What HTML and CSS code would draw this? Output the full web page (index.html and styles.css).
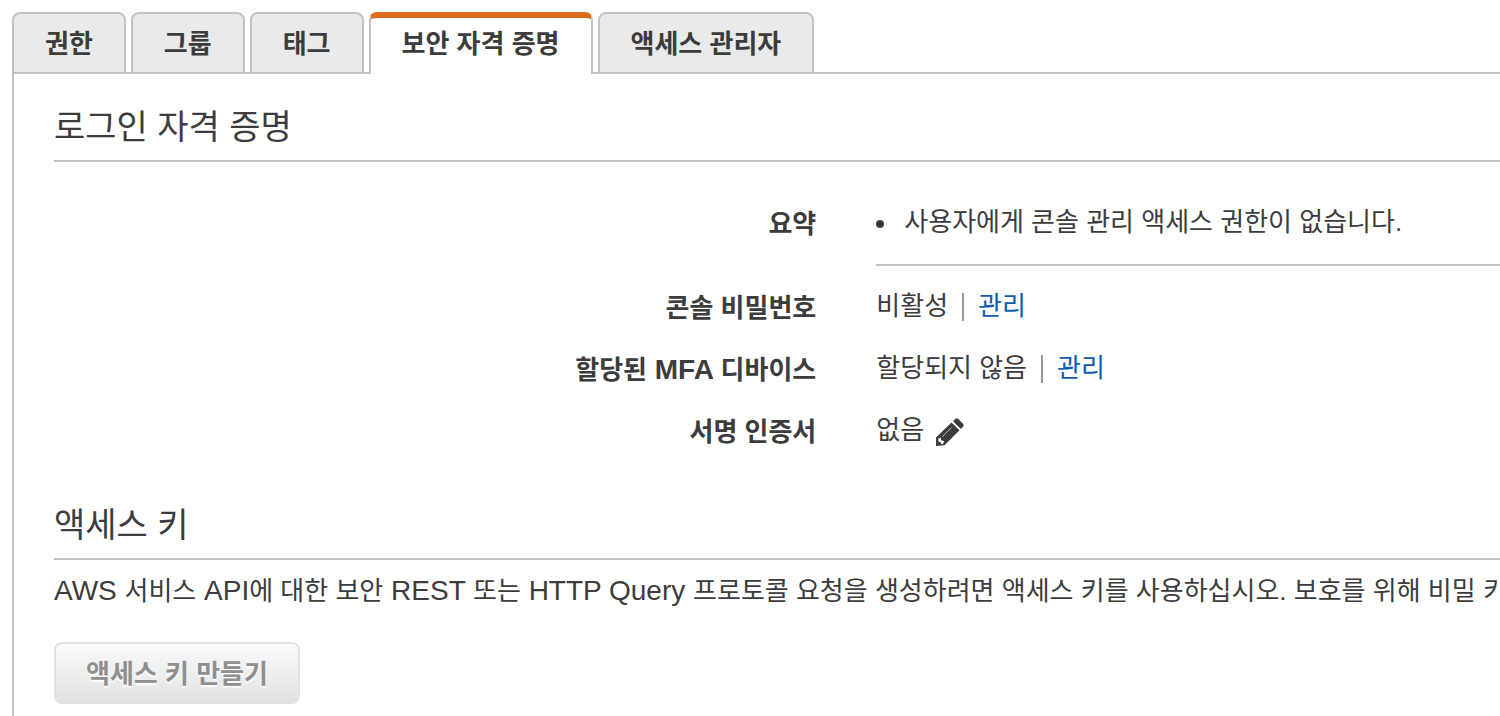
FILE: index.html
```html
<!DOCTYPE html>
<html lang="ko">
<head>
<meta charset="utf-8">
<title>보안 자격 증명</title>
<link rel="stylesheet" href="styles.css">
</head>
<body>
<main class="page">
  <div class="tabs" role="tablist">
    <button class="tab" type="button" role="tab" aria-selected="false">권한</button>
    <button class="tab" type="button" role="tab" aria-selected="false">그룹</button>
    <button class="tab" type="button" role="tab" aria-selected="false">태그</button>
    <button class="tab tab-active" type="button" role="tab" aria-selected="true">보안 자격 증명</button>
    <button class="tab" type="button" role="tab" aria-selected="false">액세스 관리자</button>
  </div>
  <div class="panel" role="tabpanel">
    <section class="section">
      <h2 class="section-title">로그인 자격 증명</h2>
      <dl class="details">
        <div class="row row-summary">
          <dt class="label">요약</dt>
          <dd class="value"><ul class="notes"><li class="note">사용자에게 콘솔 관리 액세스 권한이 없습니다.</li></ul></dd>
        </div>
        <div class="row">
          <dt class="label">콘솔 비밀번호</dt>
          <dd class="value">비활성<span class="divider"></span><a class="link" href="#">관리</a></dd>
        </div>
        <div class="row">
          <dt class="label">할당된<span class="latin"> MFA </span>디바이스</dt>
          <dd class="value">할당되지 않음<span class="divider"></span><a class="link" href="#">관리</a></dd>
        </div>
        <div class="row">
          <dt class="label">서명 인증서</dt>
          <dd class="value">없음<button class="edit" type="button" aria-label="편집">
            <svg class="edit-icon" viewBox="0 0 28 28" aria-hidden="true">
              <path class="ink" d="M0 28V19.500L15.500 4.500L23.500 12.300L8.500 27.300Z"/>
              <path class="ink" d="M17 3.200L19.500 .8Q21 -.2 22.300 1L27 5.700Q28.200 7 27.200 8.500L24.800 11Z"/>
              <path class="paper" d="M2.300 20.800L4.600 19.600L5.200 22.300L8.300 23.200L7.200 25.700L5.300 26L4.700 24.200L2.300 23.400Z"/>
              <path class="shine" d="M6.300 18.800L15.500 9.600"/>
            </svg>
          </button></dd>
        </div>
      </dl>
    </section>
    <section class="section">
      <h2 class="section-title">액세스 키</h2>
      <p class="intro"><span class="latin">AWS </span>서비스<span class="latin"> API</span>에 대한 보안<span class="latin"> REST </span>또는<span class="latin"> HTTP Query </span>프로토콜 요청을 생성하려면 액세스 키를 사용하십시오. 보호를 위해 비밀 키</p>
      <button class="create" type="button" disabled>액세스 키 만들기</button>
    </section>
  </div>
</main>
</body>
</html>
```
FILE: styles.css
```css
* {
  box-sizing: border-box;
}

body {
  margin: 0;
  background: #fff;
  color: #3c3c3c;
  font-family: "Liberation Sans", "Noto Sans CJK KR", sans-serif;
  font-size: 26px;
  line-height: 38px;
}

button {
  font: inherit;
  color: inherit;
}

.page {
  display: flex;
  flex-direction: column;
  min-height: 100vh;
  padding: 12px 0 0 12px;
  overflow: hidden;
}

.latin {
  font-size: 28px;
  line-height: 1;
}

.tabs {
  display: flex;
  gap: 5px;
  margin-bottom: -2px;
}

.tab {
  height: 62px;
  padding: 2px 31px 0;
  border: 2px solid #c3c3c3;
  border-radius: 8px 8px 0 0;
  background: #eaeaea;
  font-weight: bold;
  white-space: nowrap;
}

.tab-active {
  position: relative;
  border-top: 6px solid #dd6b1c;
  border-bottom: 0;
  padding: 0 31px 4px;
  background: #fff;
}

.panel {
  flex: 1;
  padding: 24px 0 12px 40px;
  border-top: 2px solid #c3c3c3;
  border-left: 2px solid #c3c3c3;
}

.section-title {
  margin: 0;
  padding: 8px 0 12px;
  border-bottom: 2px solid #c3c3c3;
  font-size: 34px;
  font-weight: normal;
  line-height: 42px;
}

.details {
  margin: 29px 0 35px;
}

.row {
  display: grid;
  grid-template-columns: 11fr 9fr;
  column-gap: 60px;
  align-items: start;
}

.row-summary {
  margin-bottom: 9px;
}

.label {
  padding: 14px 0 10px;
  font-weight: bold;
  text-align: right;
}

.value {
  display: flex;
  align-items: center;
  margin: 0;
  padding: 12px 0;
}

.row-summary .value {
  padding-bottom: 23px;
  border-bottom: 2px solid #c3c3c3;
}

.notes {
  margin: 0;
  padding: 0;
  list-style: none;
}

.note {
  display: flex;
  align-items: center;
  gap: 20px;
}

.note::before {
  content: "";
  width: 8px;
  height: 8px;
  margin-top: 4px;
  border-radius: 50%;
  background: #3c3c3c;
}

.divider {
  width: 2px;
  height: 28px;
  margin: 2px 14px 0;
  background: #999;
}

.link {
  color: #0f5cb3;
  text-decoration: none;
}

.edit {
  display: flex;
  margin-left: 12px;
  padding: 4px 0 0;
  border: 0;
  background: none;
}

.edit-icon {
  width: 28px;
  height: 28px;
}

.ink {
  fill: #3c3c3c;
}

.paper {
  fill: #fff;
}

.shine {
  fill: none;
  stroke: #bbb;
  stroke-width: 1;
}

.intro {
  margin: 12px 0 32px;
  white-space: nowrap;
}

.create {
  height: 62px;
  padding: 2px 30px 0;
  border: 2px solid #e2e2e2;
  border-radius: 8px;
  background: linear-gradient(#fbfbfb, #e2e2e2);
  color: #8f8f8f;
  font-weight: bold;
  text-shadow: 0 2px 2px #fff;
}
```
